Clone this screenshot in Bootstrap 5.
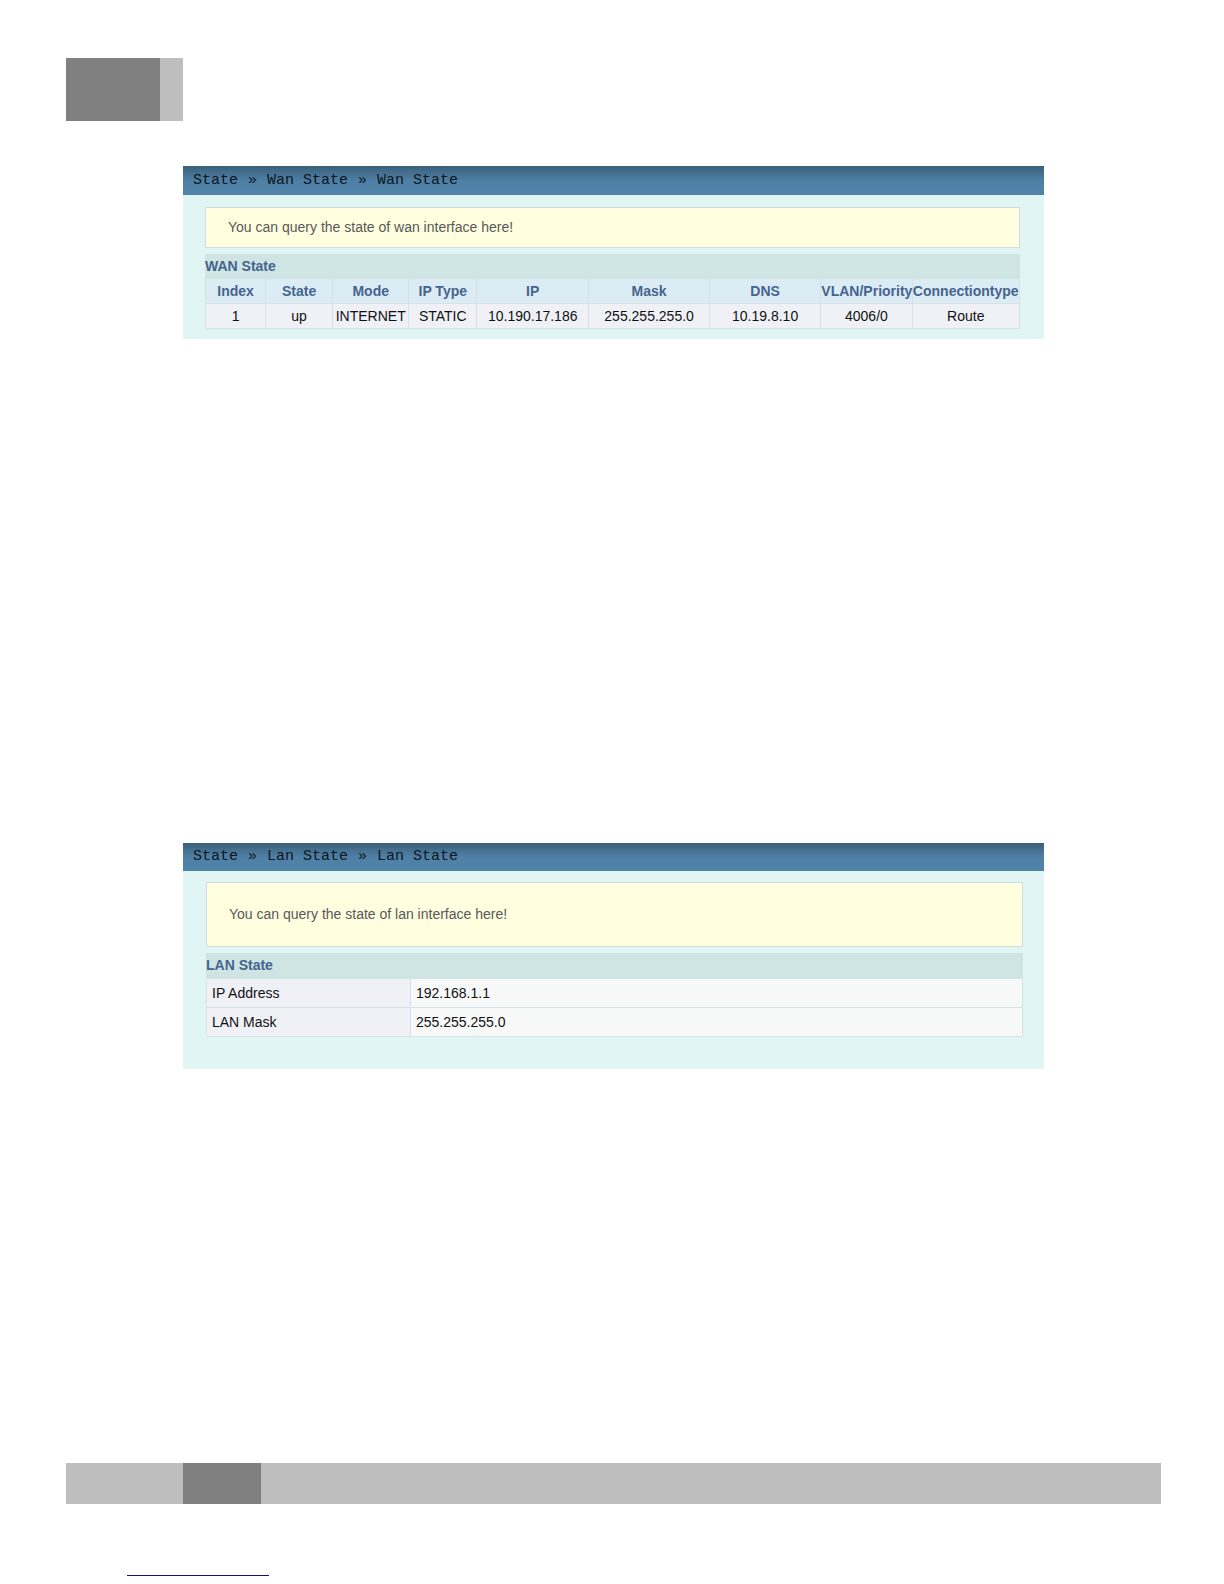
<!DOCTYPE html>
<html lang="en">
<head>
<meta charset="utf-8">
<meta name="viewport" content="width=device-width, initial-scale=1">
<title>WAN and LAN State</title>
<link href="https://cdn.jsdelivr.net/npm/bootstrap@5.3.0/dist/css/bootstrap.min.css" rel="stylesheet">
<style>
body { font-family: "Liberation Sans", Arial, sans-serif; font-size: 14px; line-height: 20px; color: #111; background: #fff; }
.sheet { padding: 58px 63px 8px 66px; }
.tab-mark { width: 117px; height: 63px; background: #bebebe; }
.tab-mark div { width: 94px; background: #808080; }
.sheet-content { padding: 45px 117px 0; }
.state-panel { background: #e1f5f5; }
.wan-panel { padding-bottom: 10px; margin-bottom: 504px; }
.lan-panel { padding-bottom: 32px; margin-bottom: 80px; }
.title-bar { height: 29px; padding-left: 10px; background: linear-gradient(#3a607a, #4f7fa5 50%, #5084aa); --bs-breadcrumb-divider: "»"; }
.lan-panel .title-bar { height: 28px; }
.title-bar .breadcrumb { font: 15px/30px "Liberation Mono", monospace; --bs-breadcrumb-font-size: 15px; --bs-breadcrumb-item-padding-x: 10px; --bs-breadcrumb-divider-color: #0b1620; --bs-breadcrumb-item-active-color: #0b1620; color: #0b1620; }
.lan-panel .breadcrumb { line-height: 28px; }
.panel-inner { padding: 12px 24px 0 22px; }
.lan-panel .panel-inner { padding: 11px 21px 0 23px; }
.notice { background: #ffffe0; border: 1px solid #cddde2; color: #585858; line-height: 19px; padding: 10px 22px; margin-bottom: 6px; }
.lan-panel .notice { padding-top: 22px; padding-bottom: 22px; }
.state-table { table-layout: fixed; border-collapse: collapse; }
.state-table caption { caption-side: top; line-height: 19px; padding: 3px 0; background: #cee5e4; color: #45648f; font-weight: bold; }
.state-table td, .state-table th { padding: 2px 0; border: 1px solid #d5e3e6; background: #f0f1f7; font-weight: normal; white-space: nowrap; }
.state-table thead th { background: #dcecf4; color: #45648f; font-weight: bold; border-top: 0; }
.state-table.lan-table td, .state-table.lan-table th { padding: 4px 5px; }
.state-table.lan-table td { background: #f7f8f8; }
.foot-bar { height: 41px; background: #bebebe; padding-left: 117px; margin-bottom: 71px; }
.foot-bar div { width: 78px; background: #808080; }
.foot-rule { width: 142px; height: 1px; margin-left: 61px; background: #101080; }
</style>
</head>
<body>
<div class="sheet min-vh-100 d-flex flex-column">
  <header class="tab-mark d-flex"><div></div></header>
  <main class="sheet-content">
    <section class="state-panel wan-panel">
      <nav class="title-bar" aria-label="WAN breadcrumb">
        <ol class="breadcrumb mb-0 flex-nowrap"><li class="breadcrumb-item">State</li><li class="breadcrumb-item">Wan State</li><li class="breadcrumb-item active">Wan State</li></ol>
      </nav>
      <div class="panel-inner">
        <div class="notice">You can query the state of wan interface here!</div>
        <table class="state-table w-100 text-center">
          <caption>WAN State</caption>
          <colgroup><col style="width:7.4%"><col style="width:8.2%"><col style="width:9.4%"><col style="width:8.3%"><col style="width:13.8%"><col style="width:14.8%"><col style="width:13.7%"><col style="width:11.2%"><col style="width:13.2%"></colgroup>
          <thead><tr><th scope="col">Index</th><th scope="col">State</th><th scope="col">Mode</th><th scope="col">IP Type</th><th scope="col">IP</th><th scope="col">Mask</th><th scope="col">DNS</th><th scope="col">VLAN/Priority</th><th scope="col">Connectiontype</th></tr></thead>
          <tbody><tr><td>1</td><td>up</td><td>INTERNET</td><td>STATIC</td><td>10.190.17.186</td><td>255.255.255.0</td><td>10.19.8.10</td><td>4006/0</td><td>Route</td></tr></tbody>
        </table>
      </div>
    </section>
    <section class="state-panel lan-panel">
      <nav class="title-bar" aria-label="LAN breadcrumb">
        <ol class="breadcrumb mb-0 flex-nowrap"><li class="breadcrumb-item">State</li><li class="breadcrumb-item">Lan State</li><li class="breadcrumb-item active">Lan State</li></ol>
      </nav>
      <div class="panel-inner">
        <div class="notice">You can query the state of lan interface here!</div>
        <table class="state-table lan-table w-100">
          <caption>LAN State</caption>
          <colgroup><col class="w-25"><col class="w-75"></colgroup>
          <tbody><tr><th scope="row">IP Address</th><td>192.168.1.1</td></tr><tr><th scope="row">LAN Mask</th><td>255.255.255.0</td></tr></tbody>
        </table>
      </div>
    </section>
  </main>
  <footer class="mt-auto">
    <div class="foot-bar d-flex"><div></div></div>
    <div class="foot-rule"></div>
  </footer>
</div>
<script src="https://cdn.jsdelivr.net/npm/bootstrap@5.3.0/dist/js/bootstrap.bundle.min.js"></script>
</body>
</html>
